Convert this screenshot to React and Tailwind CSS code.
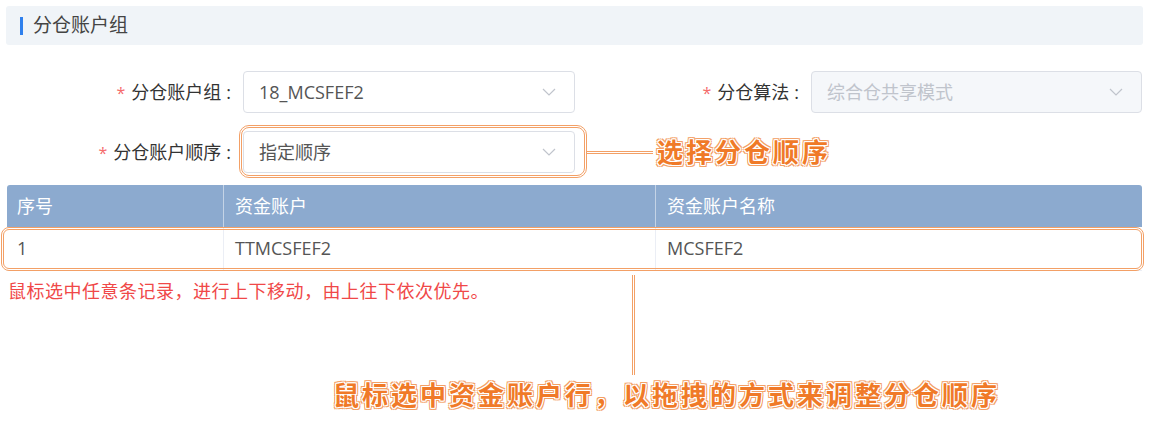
import React from 'react';

const annotation =
  "font-bold text-[#f07a28] tracking-[3px] [text-shadow:1px_0_0_#fff,-1px_0_0_#fff,0_1px_0_#fff,0_-1px_0_#fff,1px_1px_0_#fff,-1px_-1px_0_#fff,1px_-1px_0_#fff,-1px_1px_0_#fff,2px_0_0_#f3a066,-2px_0_0_#f3a066,0_2px_0_#f3a066,0_-2px_0_#f3a066,2px_2px_0_#f3a066,-2px_-2px_0_#f3a066,2px_-2px_0_#f3a066,-2px_2px_0_#f3a066]";

const Chevron = () => (
  <svg width="14" height="8" viewBox="0 0 14 8" fill="none">
    <polyline points="1,1 7,7 13,1" stroke="#c0c4cc" strokeWidth="1.2" />
  </svg>
);

const Label = ({ children, className }) => (
  <div className={`text-right text-[18px] text-[#333] ${className}`}>
    <span className="text-[#f56c6c] text-[16px] mr-[6px]">*</span>
    {children}
    <span className="ml-[5px] mr-[2px]">:</span>
  </div>
);

const Select = ({ value, disabled, className = '' }) => (
  <div
    className={`h-[42px] flex items-center justify-between pl-[15px] pr-[18px] border border-[#dcdfe6] rounded-[4px] text-[18px] ${
      disabled ? 'bg-[#f5f7fa] text-[#c0c4cc]' : 'bg-white text-[#555]'
    } ${className}`}
  >
    <span>{value}</span>
    <Chevron />
  </div>
);

export default function App() {
  return (
    <div className="relative w-[1155px] h-[430px] bg-white overflow-hidden font-['Segoe_UI','Open_Sans','Noto_Sans_CJK_SC',sans-serif]">
      {/* section title */}
      <div className="ml-[6px] mt-[6px] w-[1137px] h-[39px] bg-[#f0f4f8] rounded-[3px] flex items-center pl-[14px]">
        <div className="w-[3px] h-[18px] bg-[#2f80ed]" />
        <span className="ml-[10px] text-[19px] text-[#444]">分仓账户组</span>
      </div>

      {/* row 1 */}
      <div className="mt-[26px] flex items-center">
        <Label className="w-[233px]">分仓账户组</Label>
        <Select value="18_MCSFEF2" className="ml-[10px] w-[332px]" />
        <Label className="w-[226px]">分仓算法</Label>
        <Select value="综合仓共享模式" disabled className="ml-[10px] w-[331px]" />
      </div>

      {/* row 2 */}
      <div className="mt-[18px] flex items-center">
        <Label className="w-[233px]">分仓账户顺序</Label>
        <div className="relative ml-[10px] w-[332px]">
          <Select value="指定顺序" />
          <div className="absolute -left-[4px] -right-[12px] -top-[6px] -bottom-[5px] border-[3px] border-double border-[#f3a066] rounded-[10px]" />
        </div>
        <div className="ml-[12px] w-[66px] h-[3px] border-y border-[#f3a066] bg-white" />
        <span className={`ml-[4px] text-[26px] leading-[30px] ${annotation}`}>选择分仓顺序</span>
      </div>

      {/* table */}
      <div className="mt-[12px] ml-[7px] w-[1135px] text-[18px]">
        <div className="flex h-[42px] bg-[#8caacf] text-white rounded-t-[3px]">
          <div className="w-[216px] flex items-center pl-[10px]">序号</div>
          <div className="w-[432px] flex items-center pl-[11px] border-l border-[#c4d3e6]">资金账户</div>
          <div className="flex-1 flex items-center pl-[11px] border-l border-[#c4d3e6]">资金账户名称</div>
        </div>
        <div className="relative flex h-[44px] border-b border-[#ebeef5] text-[#555]">
          <div className="w-[216px] flex items-center pl-[10px]">1</div>
          <div className="w-[432px] flex items-center pl-[11px] border-l border-[#ebeef5]">TTMCSFEF2</div>
          <div className="flex-1 flex items-center pl-[11px] border-l border-[#ebeef5]">MCSFEF2</div>
          <div className="absolute -left-[6px] -right-[2px] top-0 -bottom-[1px] border-[3px] border-double border-[#f3a066] rounded-[8px]" />
        </div>
      </div>

      <div className="mt-[8px] ml-[8px] text-[18px] leading-[24px] tracking-[0.5px] text-[#f04848]">
        鼠标选中任意条记录，进行上下移动，由上往下依次优先。
      </div>

      {/* connector line to table row */}
      <div className="absolute left-[632px] top-[275px] w-[3px] h-[100px] border-x border-[#f3a066] bg-white" />

      <div className={`mt-[77px] ml-[333px] text-[26px] leading-[30px] ${annotation}`}>
        鼠标选中资金账户行，以拖拽的方式来调整分仓顺序
      </div>
    </div>
  );
}
